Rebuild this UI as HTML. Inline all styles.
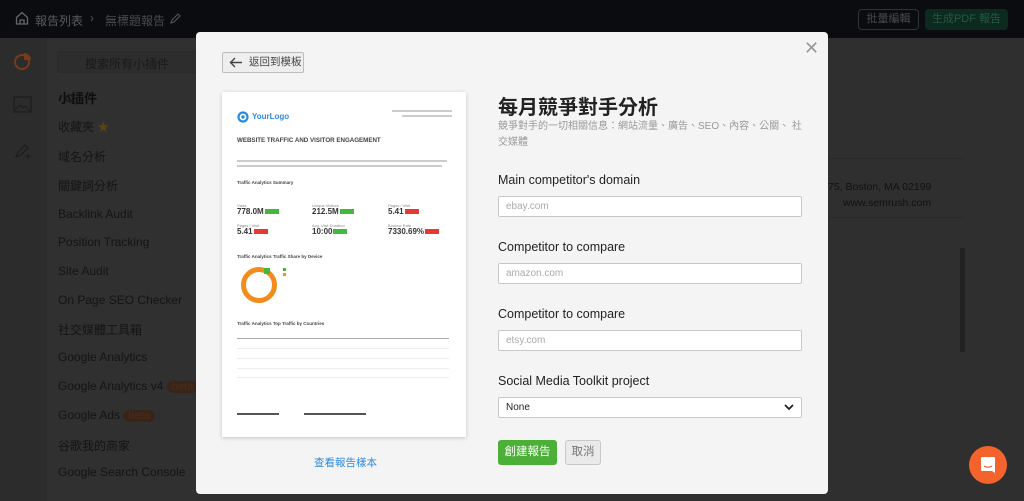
<!DOCTYPE html>
<html><head><meta charset="utf-8"><style>
*{box-sizing:border-box;margin:0;padding:0}
body{width:1024px;height:501px;overflow:hidden;background:#2f2f2f;font-family:"Liberation Sans","Noto Sans CJK TC",sans-serif;position:relative}
.top{position:absolute;left:0;top:0;width:1024px;height:38px;background:#0b0c0f;color:#555;font-size:12px}
.abs{position:absolute}
.side{position:absolute;left:0;top:38px;width:47px;height:463px;background:#2c2c2c}
.list{position:absolute;left:47px;top:38px;width:150px;height:463px;background:#303030}
.list div{position:absolute;left:11px;font-size:12px;color:#141414;white-space:nowrap}
.modal{position:absolute;left:196px;top:32px;width:632px;height:462px;background:#f4f4f4;border-radius:4px}
.lbl{position:absolute;left:302px;font-size:12.5px;color:#222}
.inp{position:absolute;left:302px;width:304px;height:21px;background:#fff;border:1px solid #c8c8c8;border-radius:2px;font-size:10px;color:#aaa;padding:4px 7px}
.doc{position:absolute;left:26px;top:60px;width:244px;height:345px;background:#fff;box-shadow:0 1px 4px rgba(0,0,0,.2);font-size:4px;color:#888}
.doc .abs{position:absolute}
.g{display:inline-block;background:#44b83c;width:14px;height:5px;vertical-align:middle;margin-left:1px}
.r{display:inline-block;background:#e53935;width:14px;height:5px;vertical-align:middle;margin-left:1px}
.big{font-size:8px;font-weight:bold;color:#333}
</style></head><body>
<div class="top">
 <svg class="abs" style="left:15px;top:11px" width="14" height="14" viewBox="0 0 14 14"><path d="M1.5 6.5L7 1.5l5.5 5V13h-11z M5 13V9h4v4" fill="none" stroke="#666" stroke-width="1.3"/></svg>
 <div class="abs" style="left:35px;top:12px;color:#5a5a5a">報告列表</div>
 <div class="abs" style="left:90px;top:11px;color:#555">›</div>
 <div class="abs" style="left:105px;top:12px;color:#4a4a4a">無標題報告</div>
 <svg class="abs" style="left:169px;top:12px" width="13" height="13" viewBox="0 0 13 13"><path d="M2 11l1-3 6-6 2 2-6 6z" fill="none" stroke="#555" stroke-width="1.1"/></svg>
 <div class="abs" style="left:858px;top:9px;width:61px;height:21px;border:1px solid #333;border-radius:4px;color:#4a4a4a;font-size:11px;text-align:center;line-height:19px">批量編輯</div>
 <div class="abs" style="left:925px;top:9px;width:83px;height:21px;background:#0c2a20;border-radius:4px;color:#265a3e;font-size:11px;text-align:center;line-height:21px">生成PDF 報告</div>
</div>
<div class="side">
 <svg class="abs" style="left:13px;top:13px" width="20" height="20" viewBox="0 0 20 20"><circle cx="9" cy="11" r="7" fill="none" stroke="#7a3a1a" stroke-width="2"/><path d="M11 2a7 7 0 0 1 7 7h-7z" fill="#7a3a1a"/></svg>
 <svg class="abs" style="left:13px;top:58px" width="19" height="17" viewBox="0 0 19 17"><rect x="1" y="1" width="17" height="15" fill="none" stroke="#1e1e1e" stroke-width="1.4"/><path d="M2 14l5-5 3 3 2-2 5 5" fill="none" stroke="#1e1e1e" stroke-width="1.3"/></svg>
 <svg class="abs" style="left:14px;top:104px" width="18" height="18" viewBox="0 0 18 18"><path d="M2 15l2-5 7-7 3 3-7 7z" fill="none" stroke="#1e1e1e" stroke-width="1.3"/><path d="M14 12v5M11.5 14.5h5" stroke="#1e1e1e" stroke-width="1.2"/></svg>
</div>
<div class="list">
 <div style="left:10px;top:13px;width:150px;height:22px;border:1px solid #2a2a2a;border-radius:3px;background:#2d2d2d"></div>
 <div style="left:38px;top:17px;color:#191919;font-size:12px">搜索所有小插件</div>
 <svg class="abs" style="left:18px;top:56px" width="11" height="11" viewBox="0 0 11 11"><circle cx="4.5" cy="4.5" r="3.5" fill="none" stroke="#1a1a1a" stroke-width="1.3"/><path d="M7 7l3 3" stroke="#1a1a1a" stroke-width="1.3"/></svg>
 <div style="top:50px;font-size:13px;font-weight:bold;color:#0e0e0e">小插件</div>
 <div style="top:80px">收藏夾 <span style="color:#5a4414">★</span></div>
 <div style="top:110px">域名分析</div>
 <div style="top:139px">關鍵詞分析</div>
 <div style="top:169px">Backlink Audit</div>
 <div style="top:197px">Position Tracking</div>
 <div style="top:226px">Site Audit</div>
 <div style="top:255px">On Page SEO Checker</div>
 <div style="top:283px">社交媒體工具箱</div>
 <div style="top:312px">Google Analytics</div>
 <div style="top:341px">Google Analytics v4 <span style="background:#3a2418;color:#4a2c1a;border-radius:6px;padding:0 5px;font-size:11px">beta</span></div>
 <div style="top:370px">Google Ads <span style="background:#3a2418;color:#4a2c1a;border-radius:6px;padding:0 5px;font-size:11px">beta</span></div>
 <div style="top:399px">谷歌我的商家</div>
 <div style="top:427px">Google Search Console</div>
</div>
<div class="abs" style="left:828px;top:158px;width:136px;height:60px;border-top:1px solid #2a2a2a;border-bottom:1px solid #2a2a2a"></div>
<div class="abs" style="left:828px;top:181px;font-size:10.5px;color:#111">75, Boston, MA 02199</div>
<div class="abs" style="left:843px;top:197px;font-size:10.5px;color:#111">www.semrush.com</div>
<div class="abs" style="left:960px;top:248px;width:5px;height:104px;background:#222"></div>

<div class="modal">
 <div class="abs" style="left:26px;top:20px;width:82px;height:21px;border:1px solid #bdbdbd;border-radius:2px;background:#eee;font-size:10.5px;color:#444;line-height:19px;padding-left:26px">返回到模板</div>
 <svg class="abs" style="left:33px;top:25px" width="14" height="11" viewBox="0 0 14 11"><path d="M13 5.5H2M6 1L1.5 5.5 6 10" fill="none" stroke="#444" stroke-width="1.4"/></svg>
 <div class="abs" style="left:608px;top:6px;font-size:18px;color:#999">✕</div>
 <div class="doc">
  <svg class="abs" style="left:15px;top:19px" width="12" height="12" viewBox="0 0 12 12"><circle cx="6" cy="6" r="4.5" fill="none" stroke="#2b8ae0" stroke-width="2.2"/><circle cx="6" cy="6" r="1.7" fill="#2b8ae0"/></svg>
  <div class="abs" style="left:30px;top:20px;font-size:8px;font-weight:bold;color:#2b8ae0">YourLogo</div>
  <div class="abs" style="left:170px;top:18px;width:60px;height:2px;background:#ccc"></div>
  <div class="abs" style="left:180px;top:23px;width:50px;height:2px;background:#ccc"></div>
  <div class="abs" style="left:15px;top:45px;font-size:6.2px;font-weight:bold;color:#444">WEBSITE TRAFFIC AND VISITOR ENGAGEMENT</div>
  <div class="abs" style="left:15px;top:68px;width:210px;height:2px;background:#ccc"></div>
  <div class="abs" style="left:15px;top:73px;width:205px;height:2px;background:#ccc"></div>
  <div class="abs" style="left:15px;top:88px;font-size:4.5px;font-weight:bold;color:#444">Traffic Analytics Summary</div>
  <div class="abs" style="left:15px;top:111px">Visits</div><div class="abs big" style="left:15px;top:115px">778.0M<span class="g"></span></div>
  <div class="abs" style="left:90px;top:111px">Unique Visitors</div><div class="abs big" style="left:90px;top:115px">212.5M<span class="g"></span></div>
  <div class="abs" style="left:166px;top:111px">Pages / Visit</div><div class="abs big" style="left:166px;top:115px">5.41<span class="r"></span></div>
  <div class="abs" style="left:15px;top:131px">Pages / Visit</div><div class="abs big" style="left:15px;top:135px">5.41<span class="r"></span></div>
  <div class="abs" style="left:90px;top:131px">Avg. Visit Duration</div><div class="abs big" style="left:90px;top:135px">10:00<span class="g"></span></div>
  <div class="abs" style="left:166px;top:131px">Bounce Rate</div><div class="abs big" style="left:166px;top:135px">7330.69%<span class="r"></span></div>
  <div class="abs" style="left:15px;top:162px;font-size:4.5px;font-weight:bold;color:#444">Traffic Analytics Traffic Share by Device</div>
  <div class="abs" style="left:19px;top:175px;width:36px;height:36px;border-radius:50%;border:5px solid #f28c1c;border-top-color:#f28c1c"></div>
  <div class="abs" style="left:42px;top:176px;width:6px;height:6px;background:#44b83c"></div>
  <div class="abs" style="left:61px;top:176px;width:3px;height:3px;background:#44b83c"></div>
  <div class="abs" style="left:61px;top:181px;width:3px;height:3px;background:#f28c1c"></div>
  <div class="abs" style="left:15px;top:229px;font-size:4.5px;font-weight:bold;color:#444">Traffic Analytics Top Traffic by Countries</div>
  <div class="abs" style="left:15px;top:246px;width:212px;border-top:1px solid #aaa"></div>
  <div class="abs" style="left:15px;top:256px;width:212px;height:1px;background:#eee"></div>
  <div class="abs" style="left:15px;top:266px;width:212px;height:1px;background:#eee"></div>
  <div class="abs" style="left:15px;top:276px;width:212px;height:1px;background:#eee"></div>
  <div class="abs" style="left:15px;top:285px;width:212px;height:1px;background:#eee"></div>
  <div class="abs" style="left:15px;top:321px;width:42px;height:2px;background:#555"></div>
  <div class="abs" style="left:82px;top:321px;width:62px;height:2px;background:#555"></div>
 </div>
 <div class="abs" style="left:118px;top:423px;font-size:10.5px;color:#2b8ae0">查看報告樣本</div>
 <div class="abs" style="left:302px;top:59px;font-size:20px;font-weight:bold;color:#222">每月競爭對手分析</div>
 <div class="abs" style="left:302px;top:87px;width:310px;font-size:10px;line-height:16px;color:#999">競爭對手的一切相關信息：網站流量、廣告、SEO、內容、公關、 社交媒體</div>
 <div class="lbl" style="top:141px">Main competitor's domain</div>
 <div class="inp" style="top:164px">ebay.com</div>
 <div class="lbl" style="top:208px">Competitor to compare</div>
 <div class="inp" style="top:231px">amazon.com</div>
 <div class="lbl" style="top:275px">Competitor to compare</div>
 <div class="inp" style="top:298px">etsy.com</div>
 <div class="lbl" style="top:342px">Social Media Toolkit project</div>
 <div class="inp" style="top:365px;color:#222">None</div>
 <svg class="abs" style="left:588px;top:372px" width="10" height="7" viewBox="0 0 10 7"><path d="M1 1l4 4 4-4" fill="none" stroke="#222" stroke-width="1.8"/></svg>
 <div class="abs" style="left:302px;top:408px;width:59px;height:25px;background:#4caf37;border-radius:3px;color:#fff;font-size:11.5px;text-align:center;line-height:25px">創建報告</div>
 <div class="abs" style="left:369px;top:408px;width:36px;height:25px;background:#eaeaea;border:1px solid #c8c8c8;border-radius:3px;color:#777;font-size:11.5px;text-align:center;line-height:23px">取消</div>
</div>
<div class="abs" style="left:969px;top:446px;width:38px;height:38px;border-radius:50%;background:#f4632b"></div>
<svg class="abs" style="left:980px;top:456px" width="16" height="18" viewBox="0 0 16 18"><path d="M1 2a1 1 0 0 1 1-1h12a1 1 0 0 1 1 1v15l-3-2H2a1 1 0 0 1-1-1z" fill="#fff"/><path d="M4 10q4 2.5 8 0" fill="none" stroke="#f4632b" stroke-width="1.2"/></svg>
</body></html>
